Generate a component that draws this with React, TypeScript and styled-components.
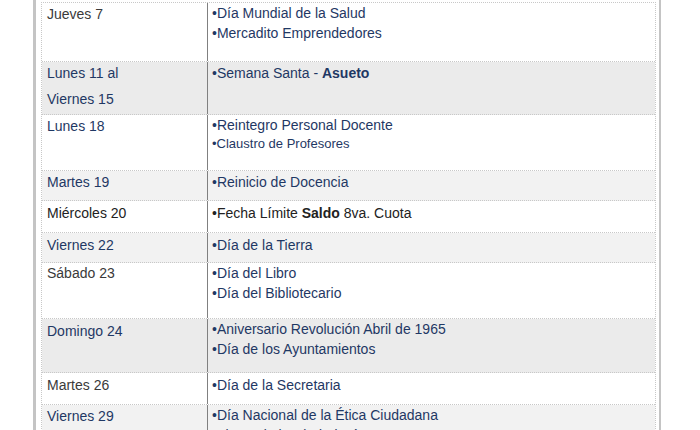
import React from "react";
import styled, { createGlobalStyle } from "styled-components";

const Global = createGlobalStyle`
  html, body { margin: 0; padding: 0; background: #ffffff; }
  body { font-family: "Liberation Sans", Arial, sans-serif; }
`;

const NAVY = "#1f3864";
const INK = "#3a3a3a";

const Page = styled.div`
  width: 700px;
  height: 430px;
  overflow: hidden;
  background: #fff;
  padding-left: 33px;
  box-sizing: border-box;
`;

const Frame = styled.div`
  width: 628px;
  box-sizing: border-box;
  border-left: 3px solid #c4c4c4;
  border-right: 2px solid #c4c4c4;
  padding: 2px 3px 0 5px;
  min-height: 440px;
`;

const Table = styled.div`
  display: flex;
  flex-direction: column;
  border-left: 1px dotted #c8c8c8;
  border-right: 1px dotted #c8c8c8;
  border-top: 1px dotted #c8c8c8;
`;

const Row = styled.div<{ $bg: string; $h: number }>`
  display: grid;
  grid-template-columns: 166px 1fr;
  height: ${(p) => p.$h}px;
  box-sizing: border-box;
  background: ${(p) => p.$bg};
  border-bottom: 1px dotted #c8c8c8;
`;

const DateCell = styled.div<{ $pt: number; $c: string }>`
  border-right: 1px solid #808080;
  padding: ${(p) => p.$pt}px 0 0 5px;
  font-size: 14px;
  line-height: 20px;
  color: ${(p) => p.$c};
  display: flex;
  flex-direction: column;
  gap: 6px;
`;

const EventCell = styled.div<{ $pt: number }>`
  padding: ${(p) => p.$pt}px 0 0 4px;
  display: flex;
  flex-direction: column;
`;

const Item = styled.div<{ $c: string; $small?: boolean }>`
  font-size: ${(p) => (p.$small ? 13 : 14)}px;
  line-height: ${(p) => (p.$small ? 18 : 20)}px;
  color: ${(p) => p.$c};
  white-space: nowrap;
  b { font-weight: bold; }
`;

type Ev = { t: React.ReactNode; c?: string; small?: boolean };
type R = {
  d: string[];
  dc: string;
  bg: string;
  h: number;
  pt: number;
  ept?: number;
  ev: Ev[];
};

const G1 = "#ebebeb";
const G2 = "#f2f2f2";

const rows: R[] = [
  {
    d: ["Jueves 7"], dc: INK, bg: "#fff", h: 59, pt: 1, ept: 0,
    ev: [{ t: "•Día Mundial de la Salud" }, { t: "•Mercadito Emprendedores" }],
  },
  {
    d: ["Lunes 11 al", "Viernes 15"], dc: NAVY, bg: G1, h: 53, pt: 1,
    ev: [{ t: <>•Semana Santa - <b>Asueto</b></> }],
  },
  {
    d: ["Lunes 18"], dc: NAVY, bg: "#fff", h: 56, pt: 1, ept: 0,
    ev: [{ t: "•Reintegro Personal Docente" }, { t: "•Claustro de Profesores", small: true }],
  },
  {
    d: ["Martes 19"], dc: NAVY, bg: G2, h: 30, pt: 1,
    ev: [{ t: "•Reinicio de Docencia" }],
  },
  {
    d: ["Miércoles 20"], dc: "#222", bg: "#fff", h: 32, pt: 2,
    ev: [{ t: <>•Fecha Límite <b>Saldo</b> 8va. Cuota</>, c: "#222" }],
  },
  {
    d: ["Viernes 22"], dc: NAVY, bg: G2, h: 30, pt: 2,
    ev: [{ t: "•Día de la Tierra" }],
  },
  {
    d: ["Sábado 23"], dc: INK, bg: "#fff", h: 56, pt: 0,
    ev: [{ t: "•Día del Libro" }, { t: "•Día del Bibliotecario" }],
  },
  {
    d: ["Domingo 24"], dc: NAVY, bg: G1, h: 54, pt: 2, ept: 0,
    ev: [{ t: "•Aniversario Revolución Abril de 1965" }, { t: "•Día de los Ayuntamientos" }],
  },
  {
    d: ["Martes 26"], dc: INK, bg: "#fff", h: 32, pt: 2,
    ev: [{ t: "•Día de la Secretaria" }],
  },
  {
    d: ["Viernes 29"], dc: NAVY, bg: G2, h: 60, pt: 1, ept: 0,
    ev: [{ t: "•Día Nacional de la Ética Ciudadana" }, { t: "•Fiesta de la Ciudadanía" }],
  },
];

export default function App() {
  return (
    <>
      <Global />
      <Page>
        <Frame>
          <Table>
            {rows.map((r, i) => (
              <Row key={i} $bg={r.bg} $h={r.h}>
                <DateCell $pt={r.pt} $c={r.dc}>
                  {r.d.map((x, j) => (
                    <span key={j}>{x}</span>
                  ))}
                </DateCell>
                <EventCell $pt={r.ept ?? r.pt}>
                  {r.ev.map((e, j) => (
                    <Item key={j} $c={e.c ?? NAVY} $small={e.small}>
                      {e.t}
                    </Item>
                  ))}
                </EventCell>
              </Row>
            ))}
          </Table>
        </Frame>
      </Page>
    </>
  );
}
